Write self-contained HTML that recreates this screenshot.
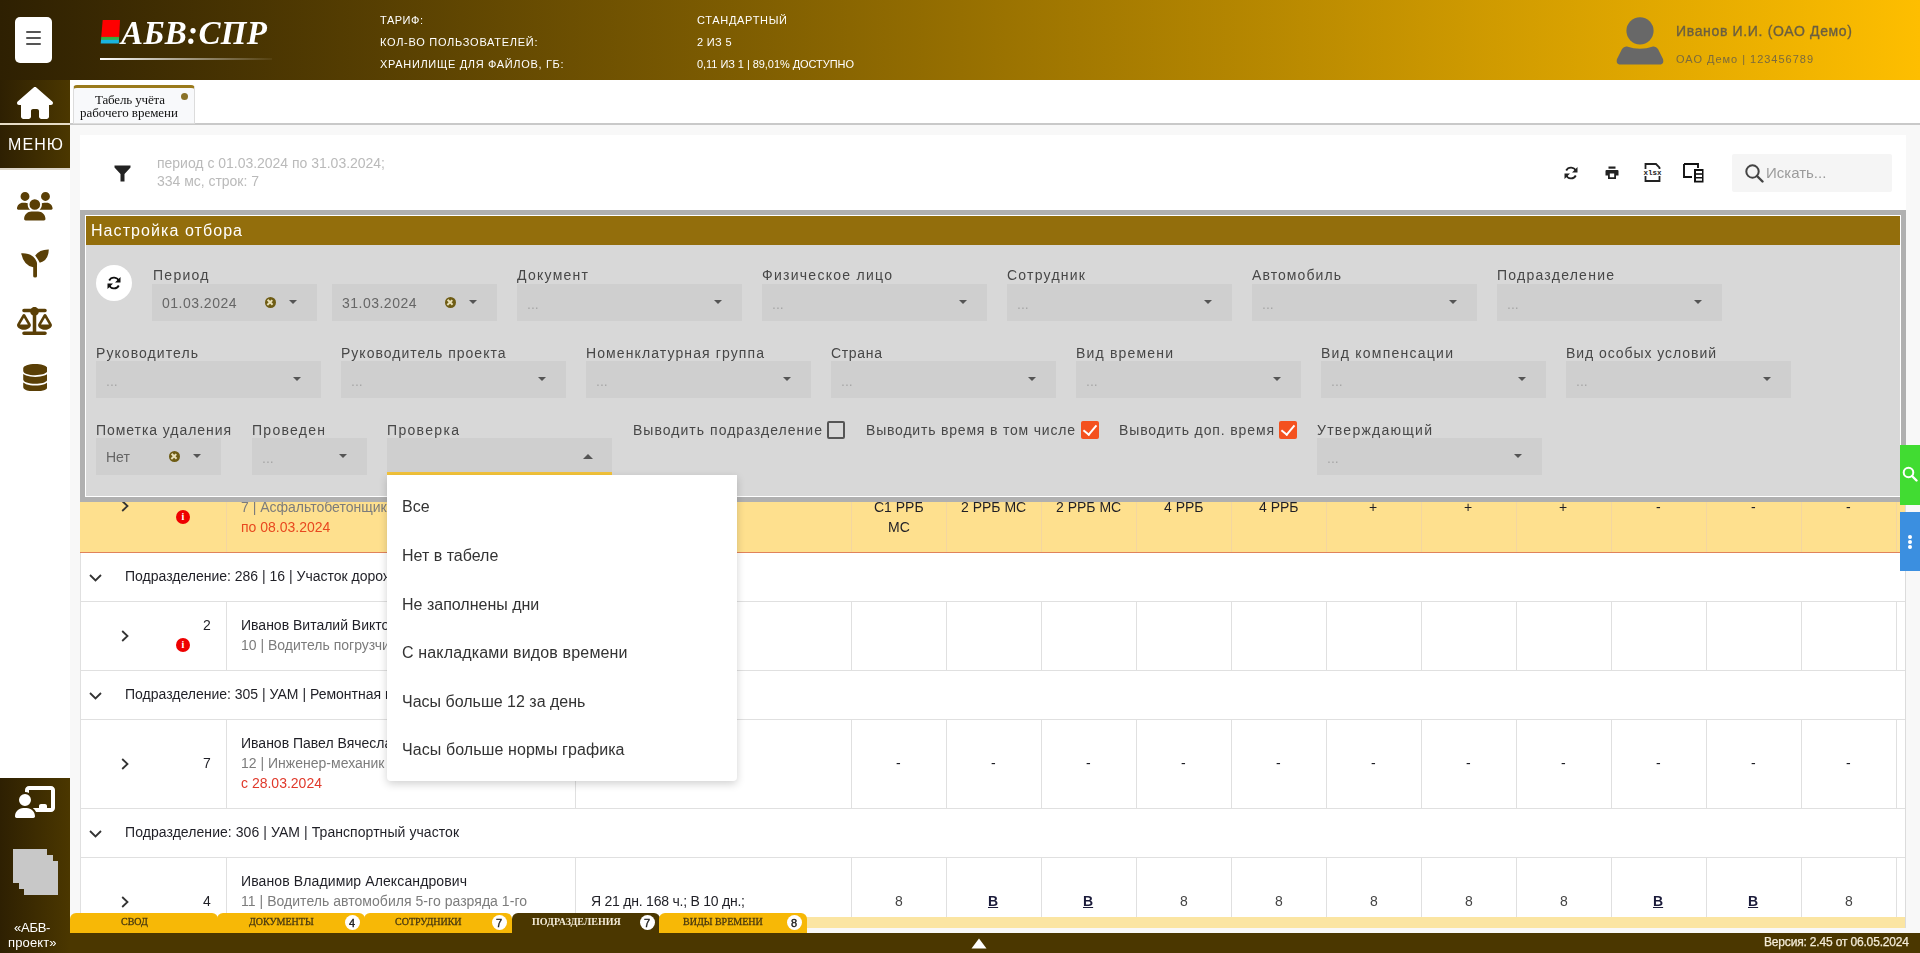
<!DOCTYPE html>
<html><head><meta charset="utf-8">
<style>
*{box-sizing:border-box;margin:0;padding:0}
html,body{width:1920px;height:953px;overflow:hidden;background:#f8f8f8;font-family:"Liberation Sans",sans-serif;color:#333}
.a{position:absolute}
.t{position:absolute;white-space:nowrap;line-height:1;will-change:transform}
.bm{display:inline-block;width:0;height:0;vertical-align:baseline}
.sb{background:linear-gradient(90deg,#2e2002,#4b3700)}
.ic{fill:#5a3f06}
.sel{position:absolute;height:37px;background:#cfcfcf}
.clr{position:absolute;width:11px;height:11px;border-radius:50%;background:#6e5c14}
.clr::before,.clr::after{content:"";position:absolute;left:4.7px;top:2.2px;width:1.6px;height:6.6px;background:#e8dfb8;transform:rotate(45deg)}
.clr::after{transform:rotate(-45deg)}
.chk{position:absolute;width:18px;height:18px;background:#f4511e;border-radius:2px}
.chk::after{content:"";position:absolute;left:5px;top:1px;width:6px;height:11px;border-right:2.5px solid #fff;border-bottom:2.5px solid #fff;transform:rotate(40deg)}
.info{position:absolute;width:14px;height:14px;border-radius:50%;background:#e00}
.info::after{content:"i";position:absolute;left:0;top:1px;width:14px;text-align:center;font:bold 10px "Liberation Serif",serif;color:#fff}
.cd{position:absolute;width:0;height:0;border-left:4.5px solid transparent;border-right:4.5px solid transparent;border-top:4.5px solid #555}
.cu{position:absolute;width:0;height:0;border-left:5px solid transparent;border-right:5px solid transparent;border-bottom:5px solid #555}
</style></head><body>
<div class="a" style="left:0;top:0;width:1920px;height:80px;background:linear-gradient(90deg,#2e2002,#febe00)"></div>
<div class="a" style="left:15px;top:17px;width:37px;height:46px;background:#fff;border-radius:5px"></div>
<div class="a" style="left:26px;top:31px;width:15px;height:2px;background:#555;border-radius:1px"></div>
<div class="a" style="left:26px;top:37px;width:15px;height:2px;background:#555;border-radius:1px"></div>
<div class="a" style="left:26px;top:43px;width:15px;height:2px;background:#555;border-radius:1px"></div>
<svg class="a" style="left:100px;top:19px" width="22" height="26" viewBox="0 0 22 26"><defs><linearGradient id="lg" x1="0" y1="0" x2="0" y2="1"><stop offset="0" stop-color="#f00"/><stop offset="0.7" stop-color="#f00"/><stop offset="0.72" stop-color="#3aae2a"/><stop offset="0.84" stop-color="#2ab068"/><stop offset="0.86" stop-color="#1ab4e0"/><stop offset="1" stop-color="#1ab4e0"/></linearGradient></defs><path d="M2.7 1 L20 1 L18.8 24.5 L0.7 24.5Z" fill="url(#lg)"/></svg>
<div id="t0" class="t" style="left:121px;top:17px;font-family:'Liberation Serif',serif;font-size:33px;color:#fff;font-weight:bold;font-style:italic;letter-spacing:0.365px;">АБВ:СПР</div>
<div class="a" style="left:100px;top:58px;width:172px;height:2px;background:linear-gradient(90deg,#fff,rgba(255,255,255,0.05))"></div>
<div id="t1" class="t" style="left:380px;top:15px;font-family:'Liberation Sans',sans-serif;font-size:11px;color:#fff;letter-spacing:0.528px;">ТАРИФ:</div>
<div id="t2" class="t" style="left:380px;top:37px;font-family:'Liberation Sans',sans-serif;font-size:11px;color:#fff;letter-spacing:0.728px;">КОЛ-ВО ПОЛЬЗОВАТЕЛЕЙ:</div>
<div id="t3" class="t" style="left:380px;top:59px;font-family:'Liberation Sans',sans-serif;font-size:11px;color:#fff;letter-spacing:0.669px;">ХРАНИЛИЩЕ ДЛЯ ФАЙЛОВ, ГБ:</div>
<div id="t4" class="t" style="left:697px;top:15px;font-family:'Liberation Sans',sans-serif;font-size:11px;color:#fff;letter-spacing:0.684px;">СТАНДАРТНЫЙ</div>
<div id="t5" class="t" style="left:697px;top:37px;font-family:'Liberation Sans',sans-serif;font-size:11px;color:#fff;letter-spacing:0.319px;">2 ИЗ 5</div>
<div id="t6" class="t" style="left:697px;top:59px;font-family:'Liberation Sans',sans-serif;font-size:11px;color:#fff;letter-spacing:-0.054px;">0,11 ИЗ 1 | 89,01% ДОСТУПНО</div>
<svg class="a" style="left:1616px;top:16px" width="48" height="50" viewBox="0 0 48 50"><circle cx="24" cy="14.8" r="13.6" fill="#686868"/><path d="M11 30.5 Q24 35 37 30.5 Q40 30 42 33 L47 43 Q48.5 48.6 43 48.6 L5 48.6 Q-0.5 48.6 1 43 L6 33 Q8 30 11 30.5 Z" fill="#686868"/></svg>
<div id="t7" class="t" style="left:1676px;top:24px;font-family:'Liberation Sans',sans-serif;font-size:14px;color:#6b5f40;-webkit-text-stroke:0.35px #6b5f40;letter-spacing:0.658px;">Иванов И.И. (ОАО Демо)</div>
<div id="t8" class="t" style="left:1676px;top:54px;font-family:'Liberation Sans',sans-serif;font-size:11px;color:#7a6a3e;letter-spacing:0.984px;">ОАО Демо | 123456789</div>
<div class="a sb" style="left:0;top:80px;width:70px;height:88px"></div>
<svg class="a" style="left:17px;top:86.5px" width="36" height="32" viewBox="0 0 576 512"><path fill="#fff" d="M575.8 255.5c0 18-15 32.1-32 32.1h-32l.7 160.2c0 2.7-.2 5.4-.5 8.1V472c0 22.1-17.9 40-40 40H456c-1.1 0-2.2 0-3.3-.1c-1.4 .1-2.8 .1-4.200 .1H416 392c-22.1 0-40-17.900-40-40V448 384c0-17.700-14.300-32-32-32H256c-17.700 0-32 14.300-32 32v64 24c0 22.100-17.900 40-40 40H160 128.100c-1.500 0-3-.1-4.500-.2c-1.200 .1-2.400 .2-3.600 .2H104c-22.100 0-40-17.900-40-40V360c0-.9 0-1.900 .1-2.800V287.600H32c-18 0-32-14-32-32.100c0-9 3-17 10-24L266.400 8c7-7 15-8 22-8s15 2 21 7L564.800 231.500c8 7 12 15 11 24z"/></svg>
<div class="a" style="left:0;top:123px;width:70px;height:2px;background:#e6dcc6"></div>
<div id="t9" class="t" style="left:8px;top:137px;font-family:'Liberation Sans',sans-serif;font-size:16px;color:#fff;letter-spacing:1.094px;">МЕНЮ</div>
<div class="a" style="left:0;top:168px;width:70px;height:610px;background:#fff"></div>
<div class="a" style="left:0;top:168px;width:70px;height:2px;background:#dcd5c8"></div>
<svg class="a" style="left:17.2px;top:192px" width="35.6" height="28.5" viewBox="0 0 640 512"><path class="ic" d="M144 0a80 80 0 1 1 0 160A80 80 0 1 1 144 0zM512 0a80 80 0 1 1 0 160A80 80 0 1 1 512 0zM0 298.700C0 239.800 47.800 192 106.700 192h42.700c15.900 0 31 3.500 44.600 9.700c-1.300 7.200-1.900 14.700-1.900 22.300c0 38.200 16.800 72.500 43.300 96c-.2 0-.4 0-.7 0H21.300C9.600 320 0 310.400 0 298.700zM405.300 320c-.2 0-.4 0-.7 0c26.600-23.500 43.300-57.800 43.300-96c0-7.600-.7-15-1.900-22.300c13.600-6.300 28.700-9.700 44.600-9.700h42.700C592.200 192 640 239.800 640 298.700c0 11.800-9.600 21.300-21.300 21.300H405.300zM224 224a96 96 0 1 1 192 0 96 96 0 1 1 -192 0zM128 485.300C128 411.700 187.700 352 261.300 352H378.700C452.300 352 512 411.700 512 485.300c0 14.700-11.900 26.700-26.700 26.700H154.700c-14.700 0-26.700-11.900-26.700-26.700z"/></svg>
<svg class="a" style="left:15px;top:244px" width="40" height="38" viewBox="0 0 40 38"><path class="ic" d="M6.2 9.2 Q17.5 8.5 21.6 17.5 Q22.2 19 22 21 L22 32.2 Q22 33.4 20.1 33.4 Q18.2 33.4 18.2 32.2 L18.2 23.2 Q8.5 21.5 6.2 9.2Z"/><path class="ic" d="M20.2 11.6 Q24.5 5.3 33.8 5.5 Q33.5 16.5 24.8 18.8 Q22.6 14.8 20.2 11.6Z"/></svg>
<svg class="a" style="left:17.4px;top:306.5px" width="35" height="28" viewBox="0 0 640 512"><path class="ic" d="M384 32H512c17.700 0 32 14.300 32 32s-14.300 32-32 32H398.400c-5.200 25.800-22.900 47.100-46.400 57.300V448H512c17.700 0 32 14.300 32 32s-14.300 32-32 32H320 128c-17.700 0-32-14.300-32-32s14.300-32 32-32H288V153.300c-23.500-10.300-41.200-31.600-46.400-57.300H128c-17.700 0-32-14.300-32-32s14.300-32 32-32H256c14.600-19.400 37.800-32 64-32s49.400 12.600 64 32zm55.600 288H584.400L512 195.800 439.600 320zM512 416c-62.900 0-115.200-34-126-78.900c-2.600-11 1-22.300 6.700-32.100l95.200-163.200c5-8.600 14.200-13.800 24.100-13.800s19.100 5.300 24.100 13.800l95.200 163.200c5.700 9.800 9.300 21.100 6.700 32.100C627.200 382 574.900 416 512 416zM126.800 195.800L54.400 320H199.300L126.800 195.800zM.9 337.100c-2.600-11 1-22.300 6.700-32.100l95.200-163.200c5-8.600 14.200-13.800 24.100-13.800s19.100 5.300 24.100 13.800l95.200 163.200c5.700 9.800 9.300 21.100 6.700 32.100C242 382 189.700 416 126.800 416S11.700 382 .9 337.100z"/></svg>
<svg class="a" style="left:22.7px;top:363.8px" width="24.5" height="27.5" viewBox="0 0 448 512"><path class="ic" d="M448 80v48c0 44.200-100.300 80-224 80S0 172.200 0 128V80C0 35.800 100.300 0 224 0S448 35.800 448 80zM393.200 214.700c20.800-7.400 39.900-16.900 54.800-28.600V288c0 44.200-100.300 80-224 80S0 332.200 0 288V186.100c14.900 11.800 34 21.200 54.800 28.600C99.700 230.700 159.500 240 224 240s124.300-9.300 169.200-25.300zM0 346.100c14.900 11.800 34 21.200 54.800 28.600C99.700 390.700 159.500 400 224 400s124.300-9.300 169.200-25.300c20.800-7.400 39.900-16.900 54.800-28.600V432c0 44.200-100.300 80-224 80S0 476.200 0 432V346.100z"/></svg>
<div class="a sb" style="left:0;top:778px;width:70px;height:175px"></div>
<svg class="a" style="left:15px;top:786px" width="40" height="32" viewBox="0 0 640 512"><path fill="#fff" d="M160 64c0-35.300 28.700-64 64-64H576c35.300 0 64 28.700 64 64V352c0 35.300-28.700 64-64 64H336.800c-11.800-25.500-29.900-47.500-52.400-64H384V320c0-17.700 14.300-32 32-32h64c17.700 0 32 14.300 32 32v32h64V64L224 64v49.100C205.200 102.200 183.300 96 160 96V64zm0 64a96 96 0 1 1 0 192 96 96 0 1 1 0-192zM133.300 352h53.300C260.300 352 320 411.700 320 485.300c0 14.700-11.900 26.700-26.700 26.700H26.700C11.900 512 0 500.100 0 485.300C0 411.700 59.700 352 133.300 352z"/></svg>
<div class="a" style="left:24px;top:861px;width:34px;height:34px;background:#c8c8c8"></div>
<div class="a" style="left:18.5px;top:855px;width:34px;height:34px;background:#c8c8c8"></div>
<div class="a" style="left:13px;top:849px;width:34px;height:34px;background:#c8c8c8"></div>
<div id="t10" class="t" style="left:14.00px;top:920.7125000000001px;font-family:'Liberation Sans',sans-serif;font-size:13px;color:#fff;letter-spacing:-0.259px;">«АБВ-</div>
<div id="t11" class="t" style="left:8.40px;top:936px;font-family:'Liberation Sans',sans-serif;font-size:13px;color:#fff;letter-spacing:0.142px;">проект»</div>
<div class="a" style="left:70px;top:933px;width:1850px;height:20px;background:#4b3700"></div>
<svg class="a" style="left:971px;top:938px" width="16" height="11" viewBox="0 0 16 11"><path d="M8 0.5 L15.5 10.5 L0.5 10.5Z" fill="#fff"/></svg>
<div id="t12" class="t" style="left:1764px;top:936px;font-family:'Liberation Sans',sans-serif;font-size:12px;color:#f4ecd8;-webkit-text-stroke:0.25px #f4ecd8;letter-spacing:-0.169px;">Версия: 2.45 от 06.05.2024</div>
<div class="a" style="left:70px;top:80px;width:1850px;height:43px;background:#fff"></div>
<div class="a" style="left:70px;top:123px;width:1850px;height:2px;background:#c9c9c9"></div>
<div class="a" style="left:73px;top:85px;width:122px;height:39px;background:#f8f9fb;border:1px solid #dcdcdc;border-top:3px solid #9a7a1c;border-radius:4px 4px 0 0"></div>
<div id="t13" class="t" style="left:95.00px;top:93px;font-family:'Liberation Serif',serif;font-size:13px;color:#111;letter-spacing:-0.153px;">Табель учёта</div>
<div id="t14" class="t" style="left:80.00px;top:106px;font-family:'Liberation Serif',serif;font-size:13px;color:#111;letter-spacing:-0.029px;">рабочего времени</div>
<div class="a" style="left:181px;top:93px;width:7px;height:7px;border-radius:50%;background:#8a7228"></div>
<div class="a" style="left:80px;top:135px;width:1826px;height:798px;background:#fff"></div>
<svg class="a" style="left:114px;top:165px" width="17" height="17" viewBox="0 0 17 17"><path d="M0.5 0.5 L16.5 0.5 L16.5 2.5 L10.5 9 L10.5 16.5 L6.5 16.5 L6.5 9 L0.5 2.5Z" fill="#222"/></svg>
<div id="t15" class="t" style="left:157px;top:156px;font-family:'Liberation Sans',sans-serif;font-size:14px;color:#bababa;letter-spacing:-0.018px;">период с 01.03.2024 по 31.03.2024;</div>
<div id="t16" class="t" style="left:157px;top:174px;font-family:'Liberation Sans',sans-serif;font-size:14px;color:#bababa;letter-spacing:-0.022px;">334 мс, строк: 7</div>
<svg class="a" style="left:1564px;top:166px" width="14" height="14" viewBox="0 0 14 14"><path d="M12 5.2 A5.3 5.3 0 0 0 2.2 4.5 M2 8.8 A5.3 5.3 0 0 0 11.8 9.5" fill="none" stroke="#222" stroke-width="1.8"/><path d="M13.5 1 L13.5 6.5 L8 6.5Z M0.5 13 L0.5 7.5 L6 7.5Z" fill="#222"/></svg>
<svg class="a" style="left:1605px;top:166px" width="14" height="14" viewBox="0 0 14 14"><rect x="3.5" y="0.5" width="7" height="2.2" fill="#222"/><path d="M1.5 4 L12.5 4 Q13.5 4 13.5 5 L13.5 9.5 L11 9.5 L11 13 L3 13 L3 9.5 L0.5 9.5 L0.5 5 Q0.5 4 1.5 4Z M4.8 7.5 L4.8 11.3 L9.2 11.3 L9.2 7.5Z" fill="#222" fill-rule="evenodd"/></svg>
<svg class="a" style="left:1642px;top:163px" width="21" height="19" viewBox="0 0 21 19"><path d="M3.5 6 L3.5 1 L14 1 L17.5 4.5 L17.5 6" fill="none" stroke="#222" stroke-width="1.8"/><path d="M3.5 13 L3.5 18 L17.5 18 L17.5 13" fill="none" stroke="#222" stroke-width="1.8"/><text x="10.5" y="12.3" font-family="Liberation Mono" font-size="7.5" font-weight="bold" text-anchor="middle" fill="#222">xlsx</text></svg>
<svg class="a" style="left:1683px;top:163px" width="22" height="20" viewBox="0 0 22 20"><path d="M1 1 L15 1 L15 5 M9 14 L1 14 L1 1" fill="none" stroke="#111" stroke-width="1.9"/><rect x="11" y="6" width="9.5" height="13.5" fill="#111"/><rect x="13" y="8" width="6" height="2.2" fill="#fff"/><rect x="13" y="11.8" width="6" height="2.2" fill="#fff"/><rect x="13" y="15.5" width="6" height="2.2" fill="#fff"/></svg>
<div class="a" style="left:1732px;top:154px;width:160px;height:38px;background:#f5f5f5;border-radius:2px"></div>
<svg class="a" style="left:1745px;top:164px" width="19" height="19" viewBox="0 0 19 19"><circle cx="7.5" cy="7.5" r="6.2" fill="none" stroke="#444" stroke-width="2"/><path d="M12 12 L17.5 17.5" stroke="#444" stroke-width="2.4" stroke-linecap="round"/></svg>
<div id="t17" class="t" style="left:1766px;top:165px;font-family:'Liberation Sans',sans-serif;font-size:15px;color:#9b9b9b;">Искать...</div>
<div class="a" style="left:80px;top:497px;width:1826px;height:55px;background:#fee08e"></div>
<div class="a" style="left:80px;top:552px;width:1826px;height:1px;background:#e0835a"></div>
<div class="a" style="left:226px;top:497px;width:1px;height:55px;background:#f3d6a0"></div>
<div class="a" style="left:575px;top:497px;width:1px;height:55px;background:#f3d6a0"></div>
<div class="a" style="left:851px;top:497px;width:1px;height:55px;background:#f3d6a0"></div>
<div class="a" style="left:946px;top:497px;width:1px;height:55px;background:#f3d6a0"></div>
<div class="a" style="left:1041px;top:497px;width:1px;height:55px;background:#f3d6a0"></div>
<div class="a" style="left:1136px;top:497px;width:1px;height:55px;background:#f3d6a0"></div>
<div class="a" style="left:1231px;top:497px;width:1px;height:55px;background:#f3d6a0"></div>
<div class="a" style="left:1326px;top:497px;width:1px;height:55px;background:#f3d6a0"></div>
<div class="a" style="left:1421px;top:497px;width:1px;height:55px;background:#f3d6a0"></div>
<div class="a" style="left:1516px;top:497px;width:1px;height:55px;background:#f3d6a0"></div>
<div class="a" style="left:1611px;top:497px;width:1px;height:55px;background:#f3d6a0"></div>
<div class="a" style="left:1706px;top:497px;width:1px;height:55px;background:#f3d6a0"></div>
<div class="a" style="left:1801px;top:497px;width:1px;height:55px;background:#f3d6a0"></div>
<div class="a" style="left:1896px;top:497px;width:1px;height:55px;background:#f3d6a0"></div>
<div class="a" style="left:80px;top:553px;width:1px;height:360px;background:#e0e0e0"></div>
<div class="a" style="left:80px;top:601px;width:1825px;height:1px;background:#e0e0e0"></div>
<div class="a" style="left:226px;top:602px;width:1px;height:68px;background:#e0e0e0"></div>
<div class="a" style="left:575px;top:602px;width:1px;height:68px;background:#e0e0e0"></div>
<div class="a" style="left:851px;top:602px;width:1px;height:68px;background:#e0e0e0"></div>
<div class="a" style="left:946px;top:602px;width:1px;height:68px;background:#e0e0e0"></div>
<div class="a" style="left:1041px;top:602px;width:1px;height:68px;background:#e0e0e0"></div>
<div class="a" style="left:1136px;top:602px;width:1px;height:68px;background:#e0e0e0"></div>
<div class="a" style="left:1231px;top:602px;width:1px;height:68px;background:#e0e0e0"></div>
<div class="a" style="left:1326px;top:602px;width:1px;height:68px;background:#e0e0e0"></div>
<div class="a" style="left:1421px;top:602px;width:1px;height:68px;background:#e0e0e0"></div>
<div class="a" style="left:1516px;top:602px;width:1px;height:68px;background:#e0e0e0"></div>
<div class="a" style="left:1611px;top:602px;width:1px;height:68px;background:#e0e0e0"></div>
<div class="a" style="left:1706px;top:602px;width:1px;height:68px;background:#e0e0e0"></div>
<div class="a" style="left:1801px;top:602px;width:1px;height:68px;background:#e0e0e0"></div>
<div class="a" style="left:1896px;top:602px;width:1px;height:68px;background:#e0e0e0"></div>
<div class="a" style="left:80px;top:670px;width:1825px;height:1px;background:#e0e0e0"></div>
<div class="a" style="left:80px;top:719px;width:1825px;height:1px;background:#e0e0e0"></div>
<div class="a" style="left:226px;top:720px;width:1px;height:88px;background:#e0e0e0"></div>
<div class="a" style="left:575px;top:720px;width:1px;height:88px;background:#e0e0e0"></div>
<div class="a" style="left:851px;top:720px;width:1px;height:88px;background:#e0e0e0"></div>
<div class="a" style="left:946px;top:720px;width:1px;height:88px;background:#e0e0e0"></div>
<div class="a" style="left:1041px;top:720px;width:1px;height:88px;background:#e0e0e0"></div>
<div class="a" style="left:1136px;top:720px;width:1px;height:88px;background:#e0e0e0"></div>
<div class="a" style="left:1231px;top:720px;width:1px;height:88px;background:#e0e0e0"></div>
<div class="a" style="left:1326px;top:720px;width:1px;height:88px;background:#e0e0e0"></div>
<div class="a" style="left:1421px;top:720px;width:1px;height:88px;background:#e0e0e0"></div>
<div class="a" style="left:1516px;top:720px;width:1px;height:88px;background:#e0e0e0"></div>
<div class="a" style="left:1611px;top:720px;width:1px;height:88px;background:#e0e0e0"></div>
<div class="a" style="left:1706px;top:720px;width:1px;height:88px;background:#e0e0e0"></div>
<div class="a" style="left:1801px;top:720px;width:1px;height:88px;background:#e0e0e0"></div>
<div class="a" style="left:1896px;top:720px;width:1px;height:88px;background:#e0e0e0"></div>
<div class="a" style="left:80px;top:808px;width:1825px;height:1px;background:#e0e0e0"></div>
<div class="a" style="left:80px;top:857px;width:1825px;height:1px;background:#e0e0e0"></div>
<div class="a" style="left:226px;top:858px;width:1px;height:59px;background:#e0e0e0"></div>
<div class="a" style="left:575px;top:858px;width:1px;height:59px;background:#e0e0e0"></div>
<div class="a" style="left:851px;top:858px;width:1px;height:59px;background:#e0e0e0"></div>
<div class="a" style="left:946px;top:858px;width:1px;height:59px;background:#e0e0e0"></div>
<div class="a" style="left:1041px;top:858px;width:1px;height:59px;background:#e0e0e0"></div>
<div class="a" style="left:1136px;top:858px;width:1px;height:59px;background:#e0e0e0"></div>
<div class="a" style="left:1231px;top:858px;width:1px;height:59px;background:#e0e0e0"></div>
<div class="a" style="left:1326px;top:858px;width:1px;height:59px;background:#e0e0e0"></div>
<div class="a" style="left:1421px;top:858px;width:1px;height:59px;background:#e0e0e0"></div>
<div class="a" style="left:1516px;top:858px;width:1px;height:59px;background:#e0e0e0"></div>
<div class="a" style="left:1611px;top:858px;width:1px;height:59px;background:#e0e0e0"></div>
<div class="a" style="left:1706px;top:858px;width:1px;height:59px;background:#e0e0e0"></div>
<div class="a" style="left:1801px;top:858px;width:1px;height:59px;background:#e0e0e0"></div>
<div class="a" style="left:1896px;top:858px;width:1px;height:59px;background:#e0e0e0"></div>
<div class="a" style="left:1905px;top:502px;width:1px;height:426px;background:#dcdcdc"></div>
<svg class="a" style="left:121px;top:500px" width="8" height="12" viewBox="0 0 8 12"><path d="M1.2 1 L6.5 6 L1.2 11" fill="none" stroke="#333" stroke-width="1.8"/></svg>
<div class="info" style="left:176px;top:510px"></div>
<div id="t18" class="t" style="left:241px;top:500px;font-family:'Liberation Sans',sans-serif;font-size:14px;color:#7c7c7c;">7 | Асфальтобетонщик</div>
<div id="t19" class="t" style="left:241px;top:519.5px;font-family:'Liberation Sans',sans-serif;font-size:14px;color:#e8481f;">по 08.03.2024</div>
<div id="t20" class="t" style="left:873.67px;top:500px;font-family:'Liberation Sans',sans-serif;font-size:14px;color:#1f1f26;">С1 РРБ</div>
<div id="t21" class="t" style="left:960.90px;top:500px;font-family:'Liberation Sans',sans-serif;font-size:14px;color:#1f1f26;">2 РРБ МС</div>
<div id="t22" class="t" style="left:1055.90px;top:500px;font-family:'Liberation Sans',sans-serif;font-size:14px;color:#1f1f26;">2 РРБ МС</div>
<div id="t23" class="t" style="left:1163.73px;top:500px;font-family:'Liberation Sans',sans-serif;font-size:14px;color:#1f1f26;">4 РРБ</div>
<div id="t24" class="t" style="left:1258.73px;top:500px;font-family:'Liberation Sans',sans-serif;font-size:14px;color:#1f1f26;">4 РРБ</div>
<div id="t25" class="t" style="left:1369.41px;top:500px;font-family:'Liberation Sans',sans-serif;font-size:14px;color:#1f1f26;">+</div>
<div id="t26" class="t" style="left:1464.41px;top:500px;font-family:'Liberation Sans',sans-serif;font-size:14px;color:#1f1f26;">+</div>
<div id="t27" class="t" style="left:1559.41px;top:500px;font-family:'Liberation Sans',sans-serif;font-size:14px;color:#1f1f26;">+</div>
<div id="t28" class="t" style="left:1656.16px;top:500px;font-family:'Liberation Sans',sans-serif;font-size:14px;color:#1f1f26;">-</div>
<div id="t29" class="t" style="left:1751.16px;top:500px;font-family:'Liberation Sans',sans-serif;font-size:14px;color:#1f1f26;">-</div>
<div id="t30" class="t" style="left:1846.16px;top:500px;font-family:'Liberation Sans',sans-serif;font-size:14px;color:#1f1f26;">-</div>
<div id="t31" class="t" style="left:887.61px;top:520px;font-family:'Liberation Sans',sans-serif;font-size:14px;color:#1f1f26;">МС</div>
<svg class="a" style="left:89px;top:574px" width="13" height="8" viewBox="0 0 13 8"><path d="M1 1 L6.5 6.5 L12 1" fill="none" stroke="#333" stroke-width="1.8"/></svg>
<div id="t32" class="t" style="left:125px;top:569px;font-family:'Liberation Sans',sans-serif;font-size:14px;color:#1f1f26;">Подразделение: 286 | 16 | Участок дорожного строительства</div>
<svg class="a" style="left:121px;top:630px" width="8" height="12" viewBox="0 0 8 12"><path d="M1.2 1 L6.5 6 L1.2 11" fill="none" stroke="#333" stroke-width="1.8"/></svg>
<div class="info" style="left:176px;top:638px"></div>
<div id="t33" class="t" style="left:203.20px;top:618px;font-family:'Liberation Sans',sans-serif;font-size:14px;color:#1f1f26;">2</div>
<div id="t34" class="t" style="left:241px;top:618px;font-family:'Liberation Sans',sans-serif;font-size:14px;color:#1f1f26;">Иванов Виталий Викторович</div>
<div id="t35" class="t" style="left:241px;top:638px;font-family:'Liberation Sans',sans-serif;font-size:14px;color:#7c7c7c;">10 | Водитель погрузчика</div>
<svg class="a" style="left:89px;top:692px" width="13" height="8" viewBox="0 0 13 8"><path d="M1 1 L6.5 6.5 L12 1" fill="none" stroke="#333" stroke-width="1.8"/></svg>
<div id="t36" class="t" style="left:125px;top:687px;font-family:'Liberation Sans',sans-serif;font-size:14px;color:#1f1f26;">Подразделение: 305 | УАМ | Ремонтная мастерская</div>
<svg class="a" style="left:121px;top:758px" width="8" height="12" viewBox="0 0 8 12"><path d="M1.2 1 L6.5 6 L1.2 11" fill="none" stroke="#333" stroke-width="1.8"/></svg>
<div id="t37" class="t" style="left:203.20px;top:756px;font-family:'Liberation Sans',sans-serif;font-size:14px;color:#1f1f26;">7</div>
<div id="t38" class="t" style="left:241px;top:736px;font-family:'Liberation Sans',sans-serif;font-size:14px;color:#1f1f26;">Иванов Павел Вячеславович</div>
<div id="t39" class="t" style="left:241px;top:756px;font-family:'Liberation Sans',sans-serif;font-size:14px;color:#7c7c7c;letter-spacing:0.010px;">12 | Инженер-механик</div>
<div id="t40" class="t" style="left:241px;top:776px;font-family:'Liberation Sans',sans-serif;font-size:14px;color:#e0392b;">с 28.03.2024</div>
<div id="t41" class="t" style="left:896.16px;top:756px;font-family:'Liberation Sans',sans-serif;font-size:14px;color:#1f1f26;">-</div>
<div id="t42" class="t" style="left:991.16px;top:756px;font-family:'Liberation Sans',sans-serif;font-size:14px;color:#1f1f26;">-</div>
<div id="t43" class="t" style="left:1086.16px;top:756px;font-family:'Liberation Sans',sans-serif;font-size:14px;color:#1f1f26;">-</div>
<div id="t44" class="t" style="left:1181.16px;top:756px;font-family:'Liberation Sans',sans-serif;font-size:14px;color:#1f1f26;">-</div>
<div id="t45" class="t" style="left:1276.16px;top:756px;font-family:'Liberation Sans',sans-serif;font-size:14px;color:#1f1f26;">-</div>
<div id="t46" class="t" style="left:1371.16px;top:756px;font-family:'Liberation Sans',sans-serif;font-size:14px;color:#1f1f26;">-</div>
<div id="t47" class="t" style="left:1466.16px;top:756px;font-family:'Liberation Sans',sans-serif;font-size:14px;color:#1f1f26;">-</div>
<div id="t48" class="t" style="left:1561.16px;top:756px;font-family:'Liberation Sans',sans-serif;font-size:14px;color:#1f1f26;">-</div>
<div id="t49" class="t" style="left:1656.16px;top:756px;font-family:'Liberation Sans',sans-serif;font-size:14px;color:#1f1f26;">-</div>
<div id="t50" class="t" style="left:1751.16px;top:756px;font-family:'Liberation Sans',sans-serif;font-size:14px;color:#1f1f26;">-</div>
<div id="t51" class="t" style="left:1846.16px;top:756px;font-family:'Liberation Sans',sans-serif;font-size:14px;color:#1f1f26;">-</div>
<svg class="a" style="left:89px;top:830px" width="13" height="8" viewBox="0 0 13 8"><path d="M1 1 L6.5 6.5 L12 1" fill="none" stroke="#333" stroke-width="1.8"/></svg>
<div id="t52" class="t" style="left:125px;top:825px;font-family:'Liberation Sans',sans-serif;font-size:14px;color:#1f1f26;letter-spacing:0.065px;">Подразделение: 306 | УАМ | Транспортный участок</div>
<svg class="a" style="left:121px;top:896px" width="8" height="12" viewBox="0 0 8 12"><path d="M1.2 1 L6.5 6 L1.2 11" fill="none" stroke="#333" stroke-width="1.8"/></svg>
<div id="t53" class="t" style="left:203.20px;top:894px;font-family:'Liberation Sans',sans-serif;font-size:14px;color:#1f1f26;">4</div>
<div id="t54" class="t" style="left:241px;top:874px;font-family:'Liberation Sans',sans-serif;font-size:14px;color:#1f1f26;letter-spacing:0.116px;">Иванов Владимир Александрович</div>
<div id="t55" class="t" style="left:241px;top:894px;font-family:'Liberation Sans',sans-serif;font-size:14px;color:#7c7c7c;letter-spacing:0.040px;">11 | Водитель автомобиля 5-го разряда 1-го</div>
<div id="t56" class="t" style="left:591px;top:894px;font-family:'Liberation Sans',sans-serif;font-size:14px;color:#1f1f26;letter-spacing:-0.229px;">Я 21 дн. 168 ч.; В 10 дн.;</div>
<div id="t57" class="t" style="left:894.60px;top:894px;font-family:'Liberation Sans',sans-serif;font-size:14px;color:#444;">8</div>
<div id="t58" class="t" style="left:988.44px;top:894px;font-family:'Liberation Sans',sans-serif;font-size:14px;color:#1b1b3a;font-weight:bold;text-decoration:underline;">В</div>
<div id="t59" class="t" style="left:1083.44px;top:894px;font-family:'Liberation Sans',sans-serif;font-size:14px;color:#1b1b3a;font-weight:bold;text-decoration:underline;">В</div>
<div id="t60" class="t" style="left:1179.60px;top:894px;font-family:'Liberation Sans',sans-serif;font-size:14px;color:#444;">8</div>
<div id="t61" class="t" style="left:1274.60px;top:894px;font-family:'Liberation Sans',sans-serif;font-size:14px;color:#444;">8</div>
<div id="t62" class="t" style="left:1369.60px;top:894px;font-family:'Liberation Sans',sans-serif;font-size:14px;color:#444;">8</div>
<div id="t63" class="t" style="left:1464.60px;top:894px;font-family:'Liberation Sans',sans-serif;font-size:14px;color:#444;">8</div>
<div id="t64" class="t" style="left:1559.60px;top:894px;font-family:'Liberation Sans',sans-serif;font-size:14px;color:#444;">8</div>
<div id="t65" class="t" style="left:1653.44px;top:894px;font-family:'Liberation Sans',sans-serif;font-size:14px;color:#1b1b3a;font-weight:bold;text-decoration:underline;">В</div>
<div id="t66" class="t" style="left:1748.44px;top:894px;font-family:'Liberation Sans',sans-serif;font-size:14px;color:#1b1b3a;font-weight:bold;text-decoration:underline;">В</div>
<div id="t67" class="t" style="left:1844.60px;top:894px;font-family:'Liberation Sans',sans-serif;font-size:14px;color:#444;">8</div>
<div class="a" style="left:80px;top:210px;width:1826px;height:292px;border:5px solid #b0b0b0;background:#fff"></div>
<div class="a" style="left:86px;top:216px;width:1814px;height:29px;background:#936e0c"></div>
<div class="a" style="left:86px;top:245px;width:1814px;height:251px;background:#d8d8d8"></div>
<div id="t68" class="t" style="left:91px;top:223px;font-family:'Liberation Sans',sans-serif;font-size:16px;color:#fff;letter-spacing:1.070px;">Настройка отбора</div>
<div class="a" style="left:96px;top:265px;width:36px;height:36px;border-radius:50%;background:#fff"></div>
<svg class="a" style="left:107px;top:276px" width="14" height="14" viewBox="0 0 14 14"><path d="M12 5.2 A5.3 5.3 0 0 0 2.2 4.5 M2 8.8 A5.3 5.3 0 0 0 11.8 9.5" fill="none" stroke="#111" stroke-width="1.8"/><path d="M13.5 1 L13.5 6.5 L8 6.5Z M0.5 13 L0.5 7.5 L6 7.5Z" fill="#111"/></svg>
<div id="t69" class="t" style="left:153px;top:268px;font-family:'Liberation Sans',sans-serif;font-size:14px;color:#474747;letter-spacing:1.278px;">Период</div>
<div class="sel" style="left:152px;top:284px;width:165px"></div>
<div id="t70" class="t" style="left:162px;top:295.5px;font-family:'Liberation Sans',sans-serif;font-size:14px;color:#666;letter-spacing:0.491px;">01.03.2024</div>
<div class="clr" style="left:264.5px;top:296.8px"></div>
<div class="cd" style="left:288.5px;top:299.5px"></div>
<div class="sel" style="left:332px;top:284px;width:165px"></div>
<div id="t71" class="t" style="left:342px;top:295.5px;font-family:'Liberation Sans',sans-serif;font-size:14px;color:#666;letter-spacing:0.491px;">31.03.2024</div>
<div class="clr" style="left:444.5px;top:296.8px"></div>
<div class="cd" style="left:468.5px;top:299.5px"></div>
<div id="t72" class="t" style="left:517px;top:268px;font-family:'Liberation Sans',sans-serif;font-size:14px;color:#474747;letter-spacing:1.270px;">Документ</div>
<div class="sel" style="left:517px;top:284px;width:225px"></div>
<div id="t73" class="t" style="left:527px;top:296.5px;font-family:'Liberation Sans',sans-serif;font-size:14px;color:#a6a6a6;">...</div>
<div class="cd" style="left:713.5px;top:299.5px"></div>
<div id="t74" class="t" style="left:762px;top:268px;font-family:'Liberation Sans',sans-serif;font-size:14px;color:#474747;letter-spacing:1.273px;">Физическое лицо</div>
<div class="sel" style="left:762px;top:284px;width:225px"></div>
<div id="t75" class="t" style="left:772px;top:296.5px;font-family:'Liberation Sans',sans-serif;font-size:14px;color:#a6a6a6;">...</div>
<div class="cd" style="left:958.5px;top:299.5px"></div>
<div id="t76" class="t" style="left:1007px;top:268px;font-family:'Liberation Sans',sans-serif;font-size:14px;color:#474747;letter-spacing:1.248px;">Сотрудник</div>
<div class="sel" style="left:1007px;top:284px;width:225px"></div>
<div id="t77" class="t" style="left:1017px;top:296.5px;font-family:'Liberation Sans',sans-serif;font-size:14px;color:#a6a6a6;">...</div>
<div class="cd" style="left:1203.5px;top:299.5px"></div>
<div id="t78" class="t" style="left:1252px;top:268px;font-family:'Liberation Sans',sans-serif;font-size:14px;color:#474747;letter-spacing:1.085px;">Автомобиль</div>
<div class="sel" style="left:1252px;top:284px;width:225px"></div>
<div id="t79" class="t" style="left:1262px;top:296.5px;font-family:'Liberation Sans',sans-serif;font-size:14px;color:#a6a6a6;">...</div>
<div class="cd" style="left:1448.5px;top:299.5px"></div>
<div id="t80" class="t" style="left:1497px;top:268px;font-family:'Liberation Sans',sans-serif;font-size:14px;color:#474747;letter-spacing:1.247px;">Подразделение</div>
<div class="sel" style="left:1497px;top:284px;width:225px"></div>
<div id="t81" class="t" style="left:1507px;top:296.5px;font-family:'Liberation Sans',sans-serif;font-size:14px;color:#a6a6a6;">...</div>
<div class="cd" style="left:1693.5px;top:299.5px"></div>
<div id="t82" class="t" style="left:96px;top:345.5px;font-family:'Liberation Sans',sans-serif;font-size:14px;color:#474747;letter-spacing:1.072px;">Руководитель</div>
<div class="sel" style="left:96px;top:361px;width:225px"></div>
<div id="t83" class="t" style="left:106px;top:373.5px;font-family:'Liberation Sans',sans-serif;font-size:14px;color:#a6a6a6;">...</div>
<div class="cd" style="left:292.5px;top:376.5px"></div>
<div id="t84" class="t" style="left:341px;top:345.5px;font-family:'Liberation Sans',sans-serif;font-size:14px;color:#474747;letter-spacing:1.007px;">Руководитель проекта</div>
<div class="sel" style="left:341px;top:361px;width:225px"></div>
<div id="t85" class="t" style="left:351px;top:373.5px;font-family:'Liberation Sans',sans-serif;font-size:14px;color:#a6a6a6;">...</div>
<div class="cd" style="left:537.5px;top:376.5px"></div>
<div id="t86" class="t" style="left:586px;top:345.5px;font-family:'Liberation Sans',sans-serif;font-size:14px;color:#474747;letter-spacing:1.108px;">Номенклатурная группа</div>
<div class="sel" style="left:586px;top:361px;width:225px"></div>
<div id="t87" class="t" style="left:596px;top:373.5px;font-family:'Liberation Sans',sans-serif;font-size:14px;color:#a6a6a6;">...</div>
<div class="cd" style="left:782.5px;top:376.5px"></div>
<div id="t88" class="t" style="left:831px;top:345.5px;font-family:'Liberation Sans',sans-serif;font-size:14px;color:#474747;letter-spacing:0.675px;">Страна</div>
<div class="sel" style="left:831px;top:361px;width:225px"></div>
<div id="t89" class="t" style="left:841px;top:373.5px;font-family:'Liberation Sans',sans-serif;font-size:14px;color:#a6a6a6;">...</div>
<div class="cd" style="left:1027.5px;top:376.5px"></div>
<div id="t90" class="t" style="left:1076px;top:345.5px;font-family:'Liberation Sans',sans-serif;font-size:14px;color:#474747;letter-spacing:1.180px;">Вид времени</div>
<div class="sel" style="left:1076px;top:361px;width:225px"></div>
<div id="t91" class="t" style="left:1086px;top:373.5px;font-family:'Liberation Sans',sans-serif;font-size:14px;color:#a6a6a6;">...</div>
<div class="cd" style="left:1272.5px;top:376.5px"></div>
<div id="t92" class="t" style="left:1321px;top:345.5px;font-family:'Liberation Sans',sans-serif;font-size:14px;color:#474747;letter-spacing:1.252px;">Вид компенсации</div>
<div class="sel" style="left:1321px;top:361px;width:225px"></div>
<div id="t93" class="t" style="left:1331px;top:373.5px;font-family:'Liberation Sans',sans-serif;font-size:14px;color:#a6a6a6;">...</div>
<div class="cd" style="left:1517.5px;top:376.5px"></div>
<div id="t94" class="t" style="left:1566px;top:345.5px;font-family:'Liberation Sans',sans-serif;font-size:14px;color:#474747;letter-spacing:0.944px;">Вид особых условий</div>
<div class="sel" style="left:1566px;top:361px;width:225px"></div>
<div id="t95" class="t" style="left:1576px;top:373.5px;font-family:'Liberation Sans',sans-serif;font-size:14px;color:#a6a6a6;">...</div>
<div class="cd" style="left:1762.5px;top:376.5px"></div>
<div id="t96" class="t" style="left:96px;top:422.5px;font-family:'Liberation Sans',sans-serif;font-size:14px;color:#474747;letter-spacing:0.940px;">Пометка удаления</div>
<div class="sel" style="left:96px;top:438px;width:125px"></div>
<div id="t97" class="t" style="left:106px;top:449.5px;font-family:'Liberation Sans',sans-serif;font-size:14px;color:#666;">Нет</div>
<div class="clr" style="left:168.5px;top:450.8px"></div>
<div class="cd" style="left:192.5px;top:453.5px"></div>
<div id="t98" class="t" style="left:252px;top:422.5px;font-family:'Liberation Sans',sans-serif;font-size:14px;color:#474747;letter-spacing:1.272px;">Проведен</div>
<div class="sel" style="left:252px;top:438px;width:115px"></div>
<div id="t99" class="t" style="left:262px;top:450.5px;font-family:'Liberation Sans',sans-serif;font-size:14px;color:#a6a6a6;">...</div>
<div class="cd" style="left:338.5px;top:453.5px"></div>
<div id="t100" class="t" style="left:387px;top:422.5px;font-family:'Liberation Sans',sans-serif;font-size:14px;color:#474747;letter-spacing:1.326px;">Проверка</div>
<div class="sel" style="left:387px;top:438px;width:225px"></div>
<div class="cu" style="left:583px;top:454px"></div>
<div class="a" style="left:387px;top:472px;width:225px;height:3px;background:#f3c33a"></div>
<div id="t101" class="t" style="left:633px;top:422.5px;font-family:'Liberation Sans',sans-serif;font-size:14px;color:#474747;letter-spacing:1.033px;">Выводить подразделение</div>
<div class="a" style="left:827px;top:421px;width:18px;height:18px;border:2px solid #555;border-radius:2px"></div>
<div id="t102" class="t" style="left:866px;top:422.5px;font-family:'Liberation Sans',sans-serif;font-size:14px;color:#474747;letter-spacing:0.807px;">Выводить время в том числе</div>
<div class="chk" style="left:1081px;top:421px"></div>
<div id="t103" class="t" style="left:1119px;top:422.5px;font-family:'Liberation Sans',sans-serif;font-size:14px;color:#474747;letter-spacing:0.873px;">Выводить доп. время</div>
<div class="chk" style="left:1279px;top:421px"></div>
<div id="t104" class="t" style="left:1317px;top:422.5px;font-family:'Liberation Sans',sans-serif;font-size:14px;color:#474747;letter-spacing:1.260px;">Утверждающий</div>
<div class="sel" style="left:1317px;top:438px;width:225px"></div>
<div id="t105" class="t" style="left:1327px;top:450.5px;font-family:'Liberation Sans',sans-serif;font-size:14px;color:#a6a6a6;">...</div>
<div class="cd" style="left:1513.5px;top:453.5px"></div>
<div class="a" style="left:387px;top:475px;width:350px;height:306px;background:#fff;border-radius:0 0 4px 4px;box-shadow:0 3px 8px rgba(0,0,0,0.18)"></div>
<div id="t106" class="t" style="left:402px;top:499.3031249999999px;font-family:'Liberation Sans',sans-serif;font-size:16px;color:#333;">Все</div>
<div id="t107" class="t" style="left:402px;top:547.909375px;font-family:'Liberation Sans',sans-serif;font-size:16px;color:#333;">Нет в табеле</div>
<div id="t108" class="t" style="left:402px;top:596.5px;font-family:'Liberation Sans',sans-serif;font-size:16px;color:#333;">Не заполнены дни</div>
<div id="t109" class="t" style="left:402px;top:645.10625px;font-family:'Liberation Sans',sans-serif;font-size:16px;color:#333;letter-spacing:0.152px;">С накладками видов времени</div>
<div id="t110" class="t" style="left:402px;top:693.7125000000001px;font-family:'Liberation Sans',sans-serif;font-size:16px;color:#333;">Часы больше 12 за день</div>
<div id="t111" class="t" style="left:402px;top:742.3031249999999px;font-family:'Liberation Sans',sans-serif;font-size:16px;color:#333;letter-spacing:0.077px;">Часы больше нормы графика</div>
<div class="a" style="left:1900px;top:445px;width:20px;height:60px;background:#41dc32"></div>
<svg class="a" style="left:1902px;top:466px" width="16" height="16" viewBox="0 0 16 16"><circle cx="6.5" cy="6.5" r="4.8" fill="none" stroke="#fff" stroke-width="2"/><path d="M10 10 L14.5 14.5" stroke="#fff" stroke-width="2.4" stroke-linecap="round"/></svg>
<div class="a" style="left:1900px;top:512px;width:20px;height:59px;background:#3b8fe0"></div>
<div class="a" style="left:1908px;top:535px;width:4px;height:4px;border-radius:50%;background:#fff"></div>
<div class="a" style="left:1908px;top:540px;width:4px;height:4px;border-radius:50%;background:#fff"></div>
<div class="a" style="left:1908px;top:545px;width:4px;height:4px;border-radius:50%;background:#fff"></div>
<div class="a" style="left:806px;top:917px;width:1099px;height:11px;background:#fbe5a2"></div>
<div class="a" style="left:70px;top:928px;width:1850px;height:5px;background:#f8f8f8"></div>
<div class="a" style="left:70px;top:913px;width:148px;height:20px;background:#f7b806;border-radius:6px 6px 0 0"></div>
<div id="t112" class="t" style="left:120.55px;top:917px;font-family:'Liberation Serif',serif;font-size:10px;color:#4a3a10;-webkit-text-stroke:0.3px #4a3a10;">СВОД</div>
<div class="a" style="left:217px;top:913px;width:148px;height:20px;background:#f7b806;border-radius:6px 6px 0 0"></div>
<div id="t113" class="t" style="left:248.67px;top:917px;font-family:'Liberation Serif',serif;font-size:10px;color:#4a3a10;-webkit-text-stroke:0.3px #4a3a10;">ДОКУМЕНТЫ</div>
<div class="a" style="left:344.5px;top:915px;width:15px;height:15px;border-radius:50%;background:#fff"></div>
<div id="t114" class="t" style="left:348.94px;top:918px;font-family:'Liberation Sans',sans-serif;font-size:11px;color:#222;-webkit-text-stroke:0.4px #222;">4</div>
<div class="a" style="left:364px;top:913px;width:148px;height:20px;background:#f7b806;border-radius:6px 6px 0 0"></div>
<div id="t115" class="t" style="left:394.73px;top:917px;font-family:'Liberation Serif',serif;font-size:10px;color:#4a3a10;-webkit-text-stroke:0.3px #4a3a10;">СОТРУДНИКИ</div>
<div class="a" style="left:491.5px;top:915px;width:15px;height:15px;border-radius:50%;background:#fff"></div>
<div id="t116" class="t" style="left:495.94px;top:918px;font-family:'Liberation Sans',sans-serif;font-size:11px;color:#222;-webkit-text-stroke:0.4px #222;">7</div>
<div class="a" style="left:512px;top:913px;width:148px;height:20px;background:#4b3700;border-radius:6px 6px 0 0"></div>
<div id="t117" class="t" style="left:531.63px;top:917px;font-family:'Liberation Serif',serif;font-size:10px;color:#f4ecd8;font-weight:bold;">ПОДРАЗДЕЛЕНИЯ</div>
<div class="a" style="left:639.5px;top:915px;width:15px;height:15px;border-radius:50%;background:#fff"></div>
<div id="t118" class="t" style="left:643.94px;top:918px;font-family:'Liberation Sans',sans-serif;font-size:11px;color:#222;-webkit-text-stroke:0.4px #222;">7</div>
<div class="a" style="left:659px;top:913px;width:148px;height:20px;background:#f7b806;border-radius:6px 6px 0 0"></div>
<div id="t119" class="t" style="left:683.14px;top:917px;font-family:'Liberation Serif',serif;font-size:10px;color:#4a3a10;-webkit-text-stroke:0.3px #4a3a10;">ВИДЫ ВРЕМЕНИ</div>
<div class="a" style="left:786.5px;top:915px;width:15px;height:15px;border-radius:50%;background:#fff"></div>
<div id="t120" class="t" style="left:790.94px;top:918px;font-family:'Liberation Sans',sans-serif;font-size:11px;color:#222;-webkit-text-stroke:0.4px #222;">8</div>
</body></html>
